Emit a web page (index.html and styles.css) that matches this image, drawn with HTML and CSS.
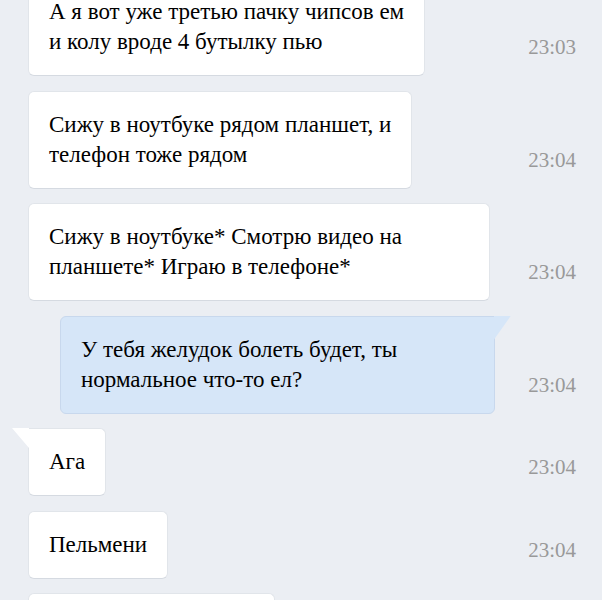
FILE: index.html
```html
<!DOCTYPE html>
<html lang="ru">
<head>
    <meta charset="UTF-8">
    <meta name="viewport" content="width=device-width, initial-scale=1.0">
    <title>Диалог</title>
    <link rel="stylesheet" href="styles.css">
</head>
<body>
    <div class="chat">
        <div class="row">
            <div class="msg">
                <div class="bubble">А я вот уже третью пачку чипсов ем<br>и колу вроде 4 бутылку пью</div>
            </div>
            <span class="time">23:03</span>
        </div>
        <div class="row">
            <div class="msg">
                <div class="bubble">Сижу в ноутбуке рядом планшет, и<br>телефон тоже рядом</div>
            </div>
            <span class="time">23:04</span>
        </div>
        <div class="row">
            <div class="msg">
                <div class="bubble">Сижу в ноутбуке* Смотрю видео на планшете* Играю в телефоне*</div>
            </div>
            <span class="time">23:04</span>
        </div>
        <div class="row">
            <div class="msg out">
                <div class="bubble tail-right">У тебя желудок болеть будет, ты нормальное что-то ел?</div>
            </div>
            <span class="time">23:04</span>
        </div>
        <div class="row">
            <div class="msg">
                <div class="bubble tail-left">Ага</div>
            </div>
            <span class="time">23:04</span>
        </div>
        <div class="row">
            <div class="msg">
                <div class="bubble">Пельмени</div>
            </div>
            <span class="time">23:04</span>
        </div>
        <div class="row">
            <div class="msg">
                <div class="bubble">Очень вкусные были</div>
            </div>
            <span class="time">23:05</span>
        </div>
    </div>
</body>
</html>
```

FILE: styles.css
```css
html, body {
    margin: 0;
    background: #ebeef3;
}

.chat {
    display: flex;
    flex-direction: column;
    gap: 14.5px;
    margin-top: -22px;
    padding: 0 26px 0 28px;
    font-family: "Liberation Serif", "Times New Roman", serif;
}

.row {
    display: flex;
    align-items: flex-end;
}

.msg {
    flex: 1;
    min-width: 0;
    display: flex;
}

.msg.out {
    padding-left: 32px;
    margin-right: -5px;
}

.bubble {
    position: relative;
    padding: 18px 20px;
    font-size: 23px;
    line-height: 30px;
    color: #000;
    background: #fff;
    border: 1px solid #e1e5ea;
    border-bottom-color: #d5dae1;
    border-radius: 6px;
}

.out .bubble {
    background: #d6e6f8;
    border-color: #c8d8ed;
}

/* bubble tails */
.tail-left {
    border-top-left-radius: 0;
}

.tail-left::before {
    content: "";
    position: absolute;
    top: -1px;
    left: -17px;
    width: 17px;
    height: 20px;
    background: #fff;
    clip-path: polygon(0 0, 100% 0, 100% 100%, 60% 60%);
}

.tail-right {
    border-top-right-radius: 0;
}

.tail-right::after {
    content: "";
    position: absolute;
    top: -1px;
    right: -17px;
    width: 17px;
    height: 24px;
    background: #d6e6f8;
    clip-path: polygon(0 0, 100% 0, 40% 60%, 0 100%);
}

.time {
    flex: none;
    width: 86px;
    padding-bottom: 17px;
    text-align: right;
    font-size: 21px;
    line-height: 24px;
    color: #999;
}
```
